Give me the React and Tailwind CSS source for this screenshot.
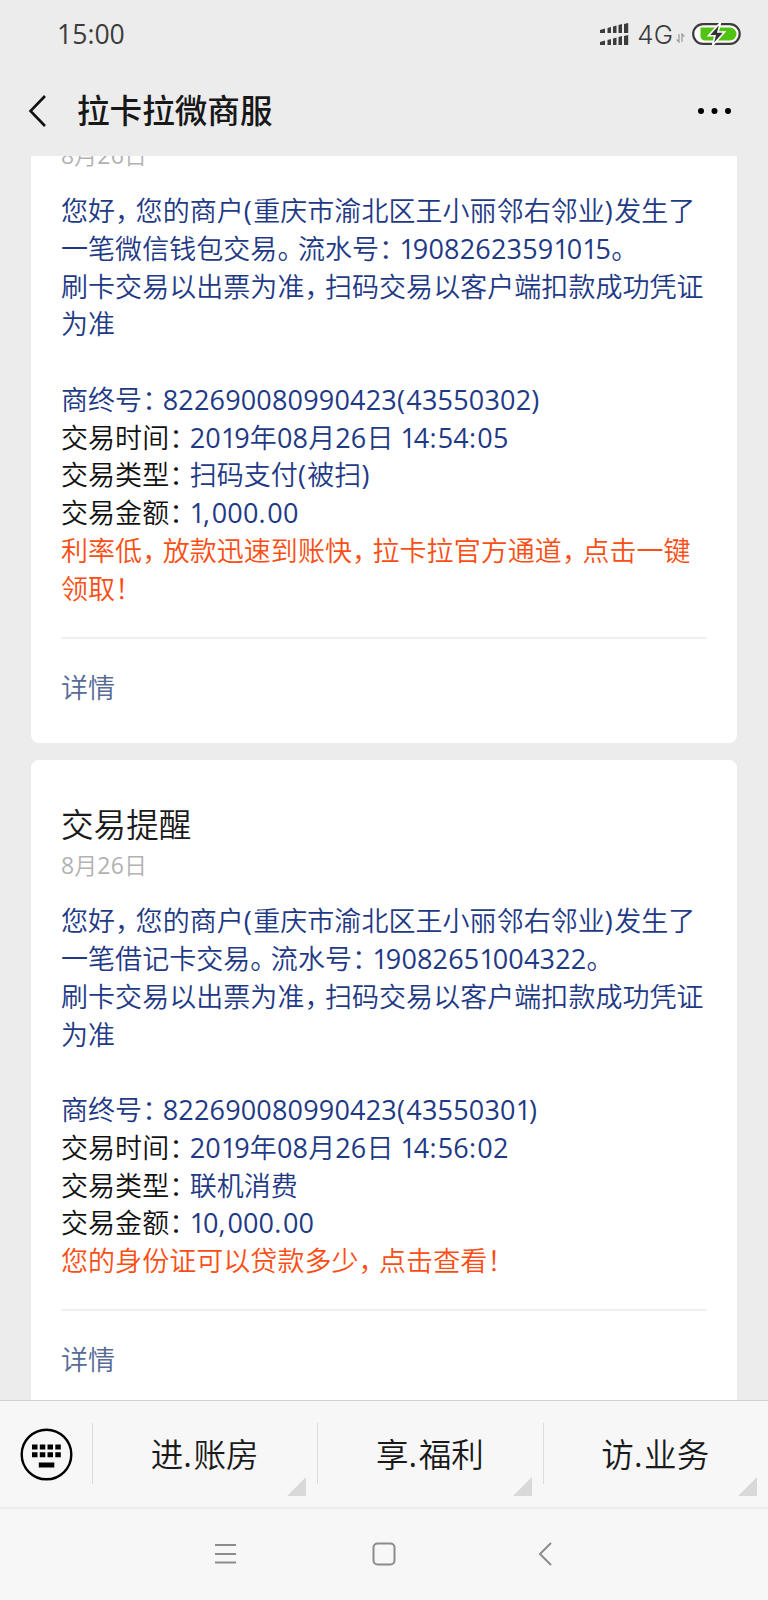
// Advance-width adjustments for characters that are set narrower or wider
// than the font's own metrics.
const RUNS = /([，。：！1().,:]|[02-9]+)/;
const TRACKING = {
  "，": "tracking-[-6.5px]",
  "。": "tracking-[-6.5px]",
  "：": "tracking-[-6.5px]",
  "！": "tracking-[-6.5px]",
  "1": "font-normal tracking-[-2.2px]",
  "(": "font-normal tracking-[1.4px]",
  ")": "font-normal tracking-[1.4px]",
  ".": "font-normal tracking-[1.6px]",
  ",": "font-normal tracking-[1.8px]",
  ":": "font-normal tracking-[1.2px]",
};
const DIGITS = "font-normal tracking-[0.18px]";

function T({ children, className = "" }) {
  return (
    <span className={className}>
      {children.split(RUNS).map((part, i) =>
        i % 2 ? (
          <span key={i} className={TRACKING[part] || DIGITS}>
            {part}
          </span>
        ) : (
          part
        )
      )}
    </span>
  );
}

function Line({ label, children }) {
  return (
    <div className="h-[37.75px]">
      {label && <T className="text-[#111]">{label}</T>}
      <T>{children}</T>
    </div>
  );
}

function Card({ title, intro, terminal, time, type, amount, promo, className = "" }) {
  return (
    <section className={`mx-[31px] shrink-0 rounded-lg bg-white px-[30px] ${className}`}>
      {title && (
        <h2 className="mb-[2px] h-[39px] text-[32.6px] leading-[37px] font-[350] text-[#1a1a1a]">{title}</h2>
      )}
      <p className="h-[36px] text-[23px] leading-[36px] font-[350] text-[#b2b2b2]">
        <T>8月26日</T>
      </p>
      <div className="mt-[19px] text-[27px] leading-[37.75px] font-[350] tracking-[0.05px] whitespace-nowrap text-[#1f3a85]">
        {intro.map((l) => (
          <Line key={l}>{l}</Line>
        ))}
        <div className="h-[37.75px]" />
        <Line>{"商终号：" + terminal}</Line>
        <Line label="交易时间：">{time}</Line>
        <Line label="交易类型：">{type}</Line>
        <Line label="交易金额：">{amount}</Line>
        <div className="text-[#fa4e14]">
          {promo.map((l) => (
            <Line key={l}>{l}</Line>
          ))}
        </div>
      </div>
      <div className="mt-[29.500px] border-t-2 border-[#f0f0f0]" />
      <a className="block h-[104.500px] pt-[29px] text-[27px] leading-[40px] font-[350] text-[#576b95]">详情</a>
    </section>
  );
}

function StatusBar() {
  return (
    <div className="flex h-[68px] items-center pr-[27px] pl-[57px] text-[#3c3c3c]">
      <span className="text-[26.6px] leading-none">15:00</span>
      <svg className="ml-auto" width="30" height="24" viewBox="0 0 30 24" fill="currentColor">
        <path d="M1 8l5-1.500V11H1zM8.500 6l3.500-1v6H8.500zM14 4.500l3.500-1V11H14zM19.500 3l3.500-1v9h-3.500zM25 2l4.200-1v10H25z" />
        <path d="M1 20l5-1.500V23H1zM8.500 18l3.500-1v6H8.500zM14 16.500l3.500-1V23H14zM19.500 15l3.500-1v9h-3.500zM25 14l4.200-1v10H25z" />
      </svg>
      <span className="mt-[2px] ml-[8px] font-['Inter'] text-[26px] leading-none font-[350]">4G</span>
      <svg className="mt-[8px] ml-[3px]" width="9" height="10" viewBox="0 0 9 10" fill="none" stroke="#999" strokeWidth="1.200">
        <path d="M3 1v8L.7 6.500M6 9V1l2.300 2.500" />
      </svg>
      <svg className="ml-[7px]" width="49" height="24" viewBox="0 0 49 24">
        <rect x="1.200" y="2.200" width="46.500" height="19.600" rx="9.800" fill="#fff" stroke="#3c3c3c" strokeWidth="2.200" />
        <path d="M8.500 5.500h29.500a6.500 6.500 0 0 1 0 13H13a4.500 4.500 0 0 1-4.500-4.500z" fill="#50c314" />
        <path d="M28.500 .5L16.500 13.700h6.500L20.500 23.500 32.500 10h-6.500z" fill="#333" stroke="#fff" strokeWidth="1.600" />
      </svg>
    </div>
  );
}

function MenuItem({ children }) {
  return (
    <div className="relative flex flex-1 items-center justify-center pt-[2px] pr-px text-[32.600px] font-[350] text-[#1a1a1a]">
      <T>{children}</T>
      <svg className="absolute right-[11px] bottom-[11px]" width="19" height="19" viewBox="0 0 19 19">
        <path d="M19 0v19H0z" fill="#d9d9d9" />
      </svg>
    </div>
  );
}

export default function App() {
  return (
    <div className="flex h-[1600px] w-[768px] flex-col overflow-hidden bg-[#ececec] font-['Open_Sans','Noto_Sans_CJK_SC',sans-serif]">
      <StatusBar />
      <header className="flex h-[88px] shrink-0 items-center pr-[35px] pb-[3px] pl-[28px]">
        <svg width="19" height="34" viewBox="0 0 19 34" fill="none" stroke="#111" strokeWidth="2.600">
          <path d="M17 2L2.500 17 17 32" />
        </svg>
        <h1 className="ml-[30px] text-[32.6px] leading-[44px] font-medium text-[#181818]">拉卡拉微商服</h1>
        <svg className="ml-auto" width="36" height="8" viewBox="0 0 36 8">
          <circle cx="4" cy="4" r="3" />
          <circle cx="17.500" cy="4" r="3" />
          <circle cx="31" cy="4" r="3" />
        </svg>
      </header>
      <main className="flex h-[1244px] shrink-0 flex-col overflow-hidden">
        <Card
          className="-mt-[19px]"
          intro={[
            "您好，您的商户(重庆市渝北区王小丽邻右邻业)发生了",
            "一笔微信钱包交易。流水号：19082623591015。",
            "刷卡交易以出票为准，扫码交易以客户端扣款成功凭证",
            "为准",
          ]}
          terminal="822690080990423(43550302)"
          time="2019年08月26日 14:54:05"
          type="扫码支付(被扫)"
          amount="1,000.00"
          promo={["利率低，放款迅速到账快，拉卡拉官方通道，点击一键", "领取！"]}
        />
        <Card
          title="交易提醒"
          className="mt-[17px] pt-[46px]"
          intro={[
            "您好，您的商户(重庆市渝北区王小丽邻右邻业)发生了",
            "一笔借记卡交易。流水号：19082651004322。",
            "刷卡交易以出票为准，扫码交易以客户端扣款成功凭证",
            "为准",
          ]}
          terminal="822690080990423(43550301)"
          time="2019年08月26日 14:56:02"
          type="联机消费"
          amount="10,000.00"
          promo={["您的身份证可以贷款多少，点击查看！"]}
        />
      </main>
      <nav className="flex h-[107px] shrink-0 border-t border-[#d0d0d0] bg-[#f7f7f7]">
        <div className="flex w-[92px] items-center pl-[20px]">
          <svg width="53" height="53" viewBox="0 0 53 53">
            <circle cx="26.500" cy="26.500" r="24.800" fill="none" stroke="#000" strokeWidth="2.400" />
            <path d="M12 16.500h5.500v5H12zM19.800 16.500h5.500v5h-5.500zM27.500 16.500H33v5h-5.500zM35.300 16.500h5.500v5h-5.500zM12 24.300h5.500v5H12zM19.800 24.300h5.500v5h-5.500zM27.500 24.300H33v5h-5.500zM35.300 24.300h5.500v5h-5.500zM18.800 34.500h15.500v5H18.800z" />
          </svg>
        </div>
        <div className="mt-[22px] mb-[23px] w-px bg-[#dcdcdc]" />
        <MenuItem>进.账房</MenuItem>
        <div className="mt-[22px] mb-[23px] w-px bg-[#dcdcdc]" />
        <MenuItem>享.福利</MenuItem>
        <div className="mt-[22px] mb-[23px] w-px bg-[#dcdcdc]" />
        <MenuItem>访.业务</MenuItem>
      </nav>
      <footer className="flex h-[93px] shrink-0 items-center border-t-2 border-[#ececec] bg-[#f7f7f7] pb-[2px] pl-[214px]">
        <svg width="23" height="24" viewBox="0 0 23 24" stroke="#8c8c8c" strokeWidth="2">
          <path d="M1 3h21M1 12h21M1 20.500h21" />
        </svg>
        <svg className="ml-[135px]" width="24" height="24" viewBox="0 0 24 24" fill="none" stroke="#8c8c8c" strokeWidth="2">
          <rect x="1.500" y="1.500" width="21" height="21" rx="4" />
        </svg>
        <svg className="ml-[142px]" width="15" height="24" viewBox="0 0 15 24" fill="none" stroke="#8c8c8c" strokeWidth="2">
          <path d="M13 1L2 12l11 11" />
        </svg>
      </footer>
    </div>
  );
}
